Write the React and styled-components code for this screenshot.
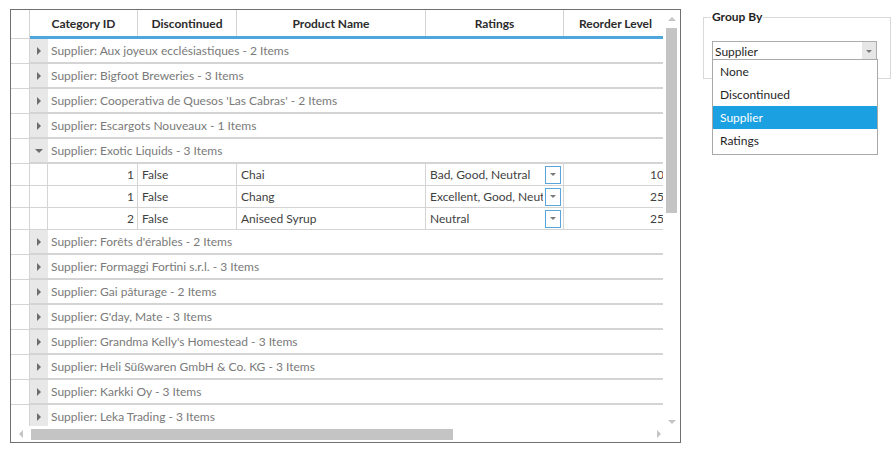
import React from 'react';
import styled, { createGlobalStyle } from 'styled-components';

const GlobalStyle = createGlobalStyle`
  body {
    margin: 0;
    background: #fff;
    font-family: Lato, "Open Sans", "Noto Sans", sans-serif;
    font-size: 12px;
  }
`;

const columns = [
  { title: 'Category ID', width: 90 },
  { title: 'Discontinued', width: 99 },
  { title: 'Product Name', width: 189 },
  { title: 'Ratings', width: 138 },
  { title: 'Reorder Level', width: 104 },
];

const groups = [
  { name: 'Aux joyeux ecclésiastiques', count: 2 },
  { name: 'Bigfoot Breweries', count: 3 },
  { name: "Cooperativa de Quesos 'Las Cabras'", count: 2 },
  { name: 'Escargots Nouveaux', count: 1 },
  {
    name: 'Exotic Liquids',
    count: 3,
    items: [
      { cat: 1, disc: 'False', product: 'Chai', ratings: 'Bad, Good, Neutral', reorder: 10 },
      { cat: 1, disc: 'False', product: 'Chang', ratings: 'Excellent, Good, Neutral', reorder: 25 },
      { cat: 2, disc: 'False', product: 'Aniseed Syrup', ratings: 'Neutral', reorder: 25 },
    ],
  },
  { name: "Forêts d'érables", count: 2 },
  { name: 'Formaggi Fortini s.r.l.', count: 3 },
  { name: 'Gai pâturage', count: 2 },
  { name: "G'day, Mate", count: 3 },
  { name: "Grandma Kelly's Homestead", count: 3 },
  { name: 'Heli Süßwaren GmbH & Co. KG', count: 3 },
  { name: 'Karkki Oy', count: 3 },
  { name: 'Leka Trading', count: 3 },
];

const Page = styled.div`
  display: flex;
  align-items: flex-start;
  padding: 9px 0 0 10px;
`;

const GridFrame = styled.div`
  width: 669px;
  height: 432px;
  border: 1px solid #707070;
  display: grid;
  grid-template-columns: 652px 17px;
  grid-template-rows: 416px 16px;
  background: #fff;
`;

const Viewport = styled.div`
  overflow: hidden;
`;

const Inner = styled.div`
  width: 700px;
`;

const HeaderWrap = styled.div`
  display: flex;
`;

const HeaderIndent = styled.div`
  width: 18px;
  height: 28px;
  flex: none;
  border-right: 1px solid #d4d4d4;
  border-bottom: 1px solid #d4d4d4;
`;

const HeaderRow = styled.div`
  display: flex;
  height: 26px;
  border-bottom: 3px solid #4fa6dc;
  color: #2b2b2b;
  font-weight: bold;
`;

const HeaderCell = styled.div`
  width: ${p => p.w}px;
  flex: none;
  display: flex;
  align-items: center;
  justify-content: center;
  border-right: 1px solid #d4d4d4;
  box-sizing: border-box;
`;

const Row = styled.div`
  display: flex;
  height: ${p => p.h}px;
`;

const IndentCell = styled.div`
  width: 18px;
  flex: none;
  border-right: 1px solid #d4d4d4;
  border-bottom: 1px solid #d4d4d4;
`;

const Expander = styled.div`
  width: 18px;
  flex: none;
  background: #e8e8e8;
  display: flex;
  align-items: center;
  justify-content: center;
  border-bottom: 2px solid #d4d4d4;
  box-sizing: border-box;
`;

const GroupText = styled.div`
  flex: 1;
  display: flex;
  align-items: center;
  padding-left: 3px;
  color: #7a7a7a;
  border-bottom: 2px solid #d4d4d4;
  white-space: nowrap;
`;

const BlankCell = styled.div`
  width: 17px;
  flex: none;
  border-right: 1px solid #d4d4d4;
  border-bottom: 1px solid #d4d4d4;
`;

const Cell = styled.div`
  width: ${p => p.w}px;
  flex: none;
  box-sizing: border-box;
  display: flex;
  align-items: center;
  justify-content: ${p => (p.right ? 'flex-end' : 'flex-start')};
  padding: 0 ${p => (p.right ? '3px' : '0')} 0 ${p => (p.right ? '0' : '4px')};
  border-right: 1px solid #d4d4d4;
  border-bottom: 1px solid #d4d4d4;
  color: #3f3f3f;
  white-space: nowrap;
  overflow: hidden;
`;

const RatingText = styled.span`
  flex: 1;
  overflow: hidden;
`;

const CellDrop = styled.div`
  width: 14px;
  height: 16px;
  flex: none;
  border: 1px solid #5aa6dc;
  margin: 0 2px;
  display: flex;
  align-items: center;
  justify-content: center;
  background: #fff;
`;

const VScroll = styled.div`
  display: flex;
  flex-direction: column;
  align-items: center;
  padding-top: 5px;
  box-sizing: border-box;
`;

const VThumb = styled.div`
  width: 11px;
  height: 185px;
  background: #c4c4c4;
  margin-top: 5px;
`;

const ScrollSpacer = styled.div`
  flex: 1;
`;

const HScroll = styled.div`
  display: flex;
  align-items: center;
  padding-left: 6px;
`;

const HThumb = styled.div`
  width: 422px;
  height: 11px;
  background: #c4c4c4;
  margin-left: 6px;
`;

const Corner = styled.div``;

const Panel = styled.div`
  margin-left: 22px;
  position: relative;
`;

const GroupBox = styled.fieldset`
  margin: 0;
  width: 186px;
  height: 68px;
  box-sizing: content-box;
  padding: 0;
  border: 1px solid #d9d9d9;
  min-width: 0;
`;

const Legend = styled.legend`
  font-weight: bold;
  color: #1f1f1f;
  padding: 0 1px;
  margin-left: 7px;
  line-height: 16px;
`;

const Combo = styled.div`
  margin: 16px 0 0 8px;
  width: 163px;
  height: 19px;
  border: 1px solid #acacac;
  display: flex;
  align-items: center;
  color: #1f1f1f;
`;

const ComboText = styled.div`
  flex: 1;
  padding-left: 2px;
`;

const ComboButton = styled.div`
  width: 14px;
  height: 19px;
  background: #e6e6e6;
  display: flex;
  align-items: center;
  justify-content: center;
`;

const Popup = styled.div`
  position: absolute;
  left: 9px;
  top: 50px;
  width: 164px;
  border: 1px solid #a9a9a9;
  background: #fff;
  padding: 0 0 2px;
`;

const Option = styled.div`
  height: 23px;
  display: flex;
  align-items: center;
  padding-left: 7px;
  color: ${p => (p.selected ? '#fff' : '#1f1f1f')};
  background: ${p => (p.selected ? '#1ba1e2' : 'transparent')};
`;

const Tri = ({ dir, color = '#6d6d6d', size = 8 }) => {
  const pts = {
    right: '2,0 6,4 2,8',
    down: '0,2 8,2 4,6',
    up: '0,6 8,6 4,2',
    left: '6,0 2,4 6,8',
  }[dir];
  return (
    <svg width={size} height={size} viewBox="0 0 8 8">
      <polygon points={pts} fill={color} />
    </svg>
  );
};

const SmallDown = () => (
  <svg width="6" height="4" viewBox="0 0 6 4">
    <polygon points="0,0 6,0 3,3" fill="#7a7a7a" />
  </svg>
);

const GroupRow = ({ group }) => (
  <Row h={25}>
    <IndentCell />
    <Expander>
      <Tri dir={group.items ? 'down' : 'right'} />
    </Expander>
    <GroupText>
      Supplier: {group.name} - {group.count} Items
    </GroupText>
  </Row>
);

const DataRow = ({ item }) => (
  <Row h={22}>
    <IndentCell />
    <BlankCell />
    <Cell w={columns[0].width} right>{item.cat}</Cell>
    <Cell w={columns[1].width}>{item.disc}</Cell>
    <Cell w={columns[2].width}>{item.product}</Cell>
    <Cell w={columns[3].width}>
      <RatingText>{item.ratings}</RatingText>
      <CellDrop>
        <SmallDown />
      </CellDrop>
    </Cell>
    <Cell w={columns[4].width} right>{item.reorder}</Cell>
  </Row>
);

export default function App() {
  const options = ['None', 'Discontinued', 'Supplier', 'Ratings'];
  return (
    <>
      <GlobalStyle />
      <Page>
        <GridFrame>
          <Viewport>
            <Inner>
              <HeaderWrap>
                <HeaderIndent />
                <HeaderRow>
                  {columns.map((c, i) => (
                    <HeaderCell key={c.title} w={i === 0 ? c.width + 18 : c.width}>
                      {c.title}
                    </HeaderCell>
                  ))}
                </HeaderRow>
              </HeaderWrap>
              {groups.map(g => (
                <React.Fragment key={g.name}>
                  <GroupRow group={g} />
                  {g.items && g.items.map(it => <DataRow key={it.product} item={it} />)}
                </React.Fragment>
              ))}
            </Inner>
          </Viewport>
          <VScroll>
            <Tri dir="up" color="#c4c4c4" />
            <VThumb />
            <ScrollSpacer />
            <Tri dir="down" color="#c4c4c4" />
          </VScroll>
          <HScroll>
            <Tri dir="left" color="#c4c4c4" />
            <HThumb />
            <ScrollSpacer />
            <Tri dir="right" color="#c4c4c4" />
          </HScroll>
          <Corner />
        </GridFrame>
        <Panel>
          <GroupBox>
            <Legend>Group By</Legend>
            <Combo>
              <ComboText>Supplier</ComboText>
              <ComboButton>
                <SmallDown />
              </ComboButton>
            </Combo>
          </GroupBox>
          <Popup>
            {options.map(o => (
              <Option key={o} selected={o === 'Supplier'}>
                {o}
              </Option>
            ))}
          </Popup>
        </Panel>
      </Page>
    </>
  );
}
